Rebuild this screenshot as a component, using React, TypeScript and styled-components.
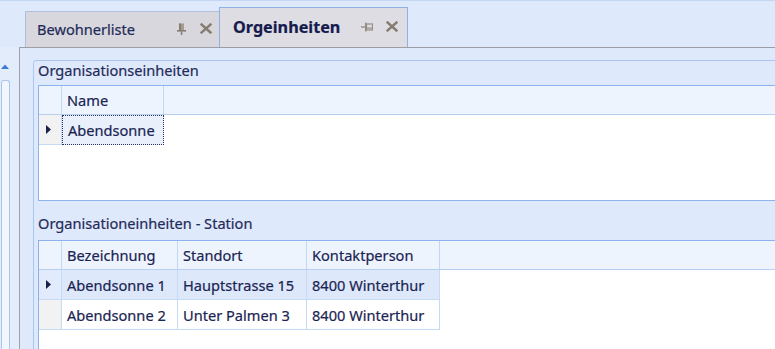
import * as React from 'react';
import styled, { createGlobalStyle } from 'styled-components';

const GlobalStyle = createGlobalStyle`
  html, body { margin: 0; padding: 0; }
  body {
    font-family: "Noto Sans", "DejaVu Sans", sans-serif;
    font-size: 14.6px;
    color: #1a2452;
    background: #dfe9fc;
    -webkit-text-stroke: 0.2px currentColor;
  }
`;

const Window = styled.div`
  width: 775px;
  height: 349px;
  overflow: hidden;
  display: flex;
  flex-direction: column;
  background: #dfe9fc;
  border-top: 1px solid #c3d6f4;
  box-sizing: border-box;
`;

const TabStrip = styled.div`
  height: 46px;
  flex: none;
  display: flex;
  align-items: flex-end;
  padding-left: 25px;
  box-sizing: border-box;
`;

const Tab = styled.div<{ active?: boolean; width: number }>`
  width: ${(p) => p.width}px;
  height: ${(p) => (p.active ? 40 : 36)}px;
  margin-left: ${(p) => (p.active ? -1 : 0)}px;
  box-sizing: border-box;
  display: flex;
  align-items: center;
  padding: 0 ${(p) => (p.active ? 9 : 7)}px 2px ${(p) => (p.active ? 13 : 11)}px;
  background: ${(p) => (p.active ? '#dfdde4' : '#d9d7de')};
  border: 1px solid ${(p) => (p.active ? '#8fb0e3' : '#aebfdc')};
  border-bottom: none;
  position: relative;
  z-index: ${(p) => (p.active ? 1 : 0)};
`;

const TabLabel = styled.span<{ active?: boolean }>`
  flex: 1;
  font-size: ${(p) => (p.active ? '16.2px' : '14.6px')};
  font-weight: ${(p) => (p.active ? 700 : 400)};
  color: ${(p) => (p.active ? '#151b4c' : '#1e2a57')};
  white-space: nowrap;
`;

const TabIcons = styled.span`
  display: flex;
  align-items: center;
  gap: 13px;
`;

const Body = styled.div`
  flex: 1;
  display: flex;
  min-height: 0;
`;

const SideStrip = styled.div`
  width: 19px;
  flex: none;
  display: flex;
  flex-direction: column;
  padding: 17px 0 0 1px;
  box-sizing: border-box;
  background: #e3ecfb;
`;

const ScrollArrow = styled.svg`
  display: block;
`;

const ScrollThumb = styled.div`
  margin-top: 11px;
  width: 9px;
  flex: 1;
  border: 1px solid #a9c4ee;
  border-bottom: none;
  border-radius: 3px 3px 0 0;
  background: #f1f6fd;
  box-sizing: border-box;
`;

const Content = styled.div`
  flex: 1;
  min-width: 0;
  border-left: 1px solid #a2a2a8;
  border-top: 1px solid #9d9da5;
  padding: 12px 0 0 13px;
  overflow: hidden;
  background: #dfe9fc;
`;

const GroupFrame = styled.div`
  margin-right: -20px;
  height: 400px;
  border: 1px solid #a9c5f0;
  border-radius: 3px 0 0 0;
  padding-left: 4px;
  display: flex;
  flex-direction: column;
`;

const GroupTitle = styled.div<{ height: number; gapBelow: number }>`
  height: ${(p) => p.height}px;
  flex: none;
  display: flex;
  align-items: flex-end;
  padding-bottom: ${(p) => p.gapBelow}px;
  box-sizing: border-box;
  color: #1f2b58;
  white-space: nowrap;
`;

const GridBox = styled.div<{ height?: number }>`
  box-sizing: border-box;
  border: 1px solid #8db3ee;
  border-right: none;
  background: #ffffff;
  ${(p) => (p.height ? `height: ${p.height}px; flex: none;` : 'flex: 1;')}
`;

const HeaderRow = styled.div`
  display: flex;
  height: 29px;
  box-sizing: border-box;
  background: #eef4fe;
  border-bottom: 1px solid #b8cff3;
`;

const HeaderCell = styled.div<{ width: number }>`
  width: ${(p) => p.width}px;
  flex: none;
  box-sizing: border-box;
  border-right: 1px solid #c3d7f5;
  padding-left: 5px;
  display: flex;
  align-items: center;
  white-space: nowrap;
`;

const DataRow = styled.div`
  display: flex;
  height: 30px;
`;

const RowHeaderCell = styled.div<{ selected?: boolean; width: number }>`
  width: ${(p) => p.width}px;
  flex: none;
  box-sizing: border-box;
  border-right: 1px solid #c6d9f5;
  border-bottom: 1px solid #c6d9f5;
  background: ${(p) => (p.selected ? '#e2ebfb' : '#f2f2f3')};
  display: flex;
  align-items: center;
  padding-left: 7px;
`;

const Cell = styled.div<{ selected?: boolean; focused?: boolean; width: number }>`
  width: ${(p) => p.width}px;
  flex: none;
  box-sizing: border-box;
  border-right: 1px solid #c6d9f5;
  border-bottom: 1px solid #c6d9f5;
  background: ${(p) => (p.focused ? '#e9f0fc' : p.selected ? '#dde8fb' : '#ffffff')};
  padding-left: 5px;
  display: flex;
  align-items: center;
  white-space: nowrap;
  ${(p) => (p.focused ? 'border: 1px dotted #2a3560;' : '')}
`;

const RowArrow = () => (
  <svg width="5" height="9" viewBox="0 0 5 9">
    <path d="M0 0 L5 4.5 L0 9 Z" fill="#1a2147" />
  </svg>
);

const PinDown = () => (
  <svg width="11" height="12" viewBox="0 0 11 12">
    <rect x="3" y="0.5" width="5" height="6.5" fill="#a39c91" />
    <rect x="3" y="0.5" width="2" height="6.5" fill="#857d71" />
    <rect x="1" y="7" width="9" height="1.6" fill="#857d71" />
    <rect x="4.8" y="8.5" width="1.5" height="3.5" fill="#857d71" />
  </svg>
);

const PinSide = () => (
  <svg width="12" height="10" viewBox="0 0 12 10">
    <rect x="0" y="4.3" width="4" height="1.4" fill="#968e83" />
    <rect x="4" y="0.5" width="1.5" height="9" fill="#968e83" />
    <rect x="5.5" y="2" width="6" height="6" fill="none" stroke="#968e83" strokeWidth="1.2" />
    <rect x="5.5" y="5.5" width="6" height="1.2" fill="#968e83" />
  </svg>
);

const CloseX = () => (
  <svg width="12" height="11" viewBox="0 0 12 11">
    <path d="M1.5 1.5 L10.5 9.5 M10.5 1.5 L1.5 9.5" stroke="#857c70" strokeWidth="2.4" strokeLinecap="square" />
  </svg>
);

interface Column {
  title: string;
  width: number;
}

interface DataGridProps {
  columns: Column[];
  rows: string[][];
  selectedRow?: number;
  focusedCell?: [number, number];
  height?: number;
}

function DataGrid(props: DataGridProps) {
  return (
    <GridBox height={props.height}>
      <HeaderRow>
        <HeaderCell width={23} />
        {props.columns.map((c) => (
          <HeaderCell key={c.title} width={c.width}>{c.title}</HeaderCell>
        ))}
      </HeaderRow>
      {props.rows.map((row, r) => {
        const sel = props.selectedRow === r;
        return (
          <DataRow key={r}>
            <RowHeaderCell width={23} selected={sel && !props.focusedCell}>
              {sel && <RowArrow />}
            </RowHeaderCell>
            {row.map((v, c) => {
              const focused = !!props.focusedCell && props.focusedCell[0] === r && props.focusedCell[1] === c;
              return (
                <Cell key={c} width={props.columns[c].width} selected={sel && !props.focusedCell} focused={focused}>
                  {v}
                </Cell>
              );
            })}
          </DataRow>
        );
      })}
    </GridBox>
  );
}

export default function App() {
  return (
    <>
      <GlobalStyle />
      <Window>
        <TabStrip>
          <Tab width={195}>
            <TabLabel>Bewohnerliste</TabLabel>
            <TabIcons>
              <PinDown />
              <CloseX />
            </TabIcons>
          </Tab>
          <Tab width={189} active>
            <TabLabel active>Orgeinheiten</TabLabel>
            <TabIcons>
              <PinSide />
              <CloseX />
            </TabIcons>
          </Tab>
        </TabStrip>
        <Body>
          <SideStrip>
            <ScrollArrow width="8" height="5" viewBox="0 0 8 5">
              <path d="M0 5 L4 0.5 L8 5 Z" fill="#3d7bd8" />
            </ScrollArrow>
            <ScrollThumb />
          </SideStrip>
          <Content>
            <GroupFrame>
              <GroupTitle height={24} gapBelow={5}>Organisationseinheiten</GroupTitle>
              <DataGrid
                height={116}
                columns={[{ title: 'Name', width: 102 }]}
                rows={[['Abendsonne']]}
                selectedRow={0}
                focusedCell={[0, 0]}
              />
              <GroupTitle height={39} gapBelow={7}>Organisationeinheiten - Station</GroupTitle>
              <DataGrid
                columns={[
                  { title: 'Bezeichnung', width: 116 },
                  { title: 'Standort', width: 129 },
                  { title: 'Kontaktperson', width: 133 },
                ]}
                rows={[
                  ['Abendsonne 1', 'Hauptstrasse 15', '8400 Winterthur'],
                  ['Abendsonne 2', 'Unter Palmen 3', '8400 Winterthur'],
                ]}
                selectedRow={0}
              />
            </GroupFrame>
          </Content>
        </Body>
      </Window>
    </>
  );
}
